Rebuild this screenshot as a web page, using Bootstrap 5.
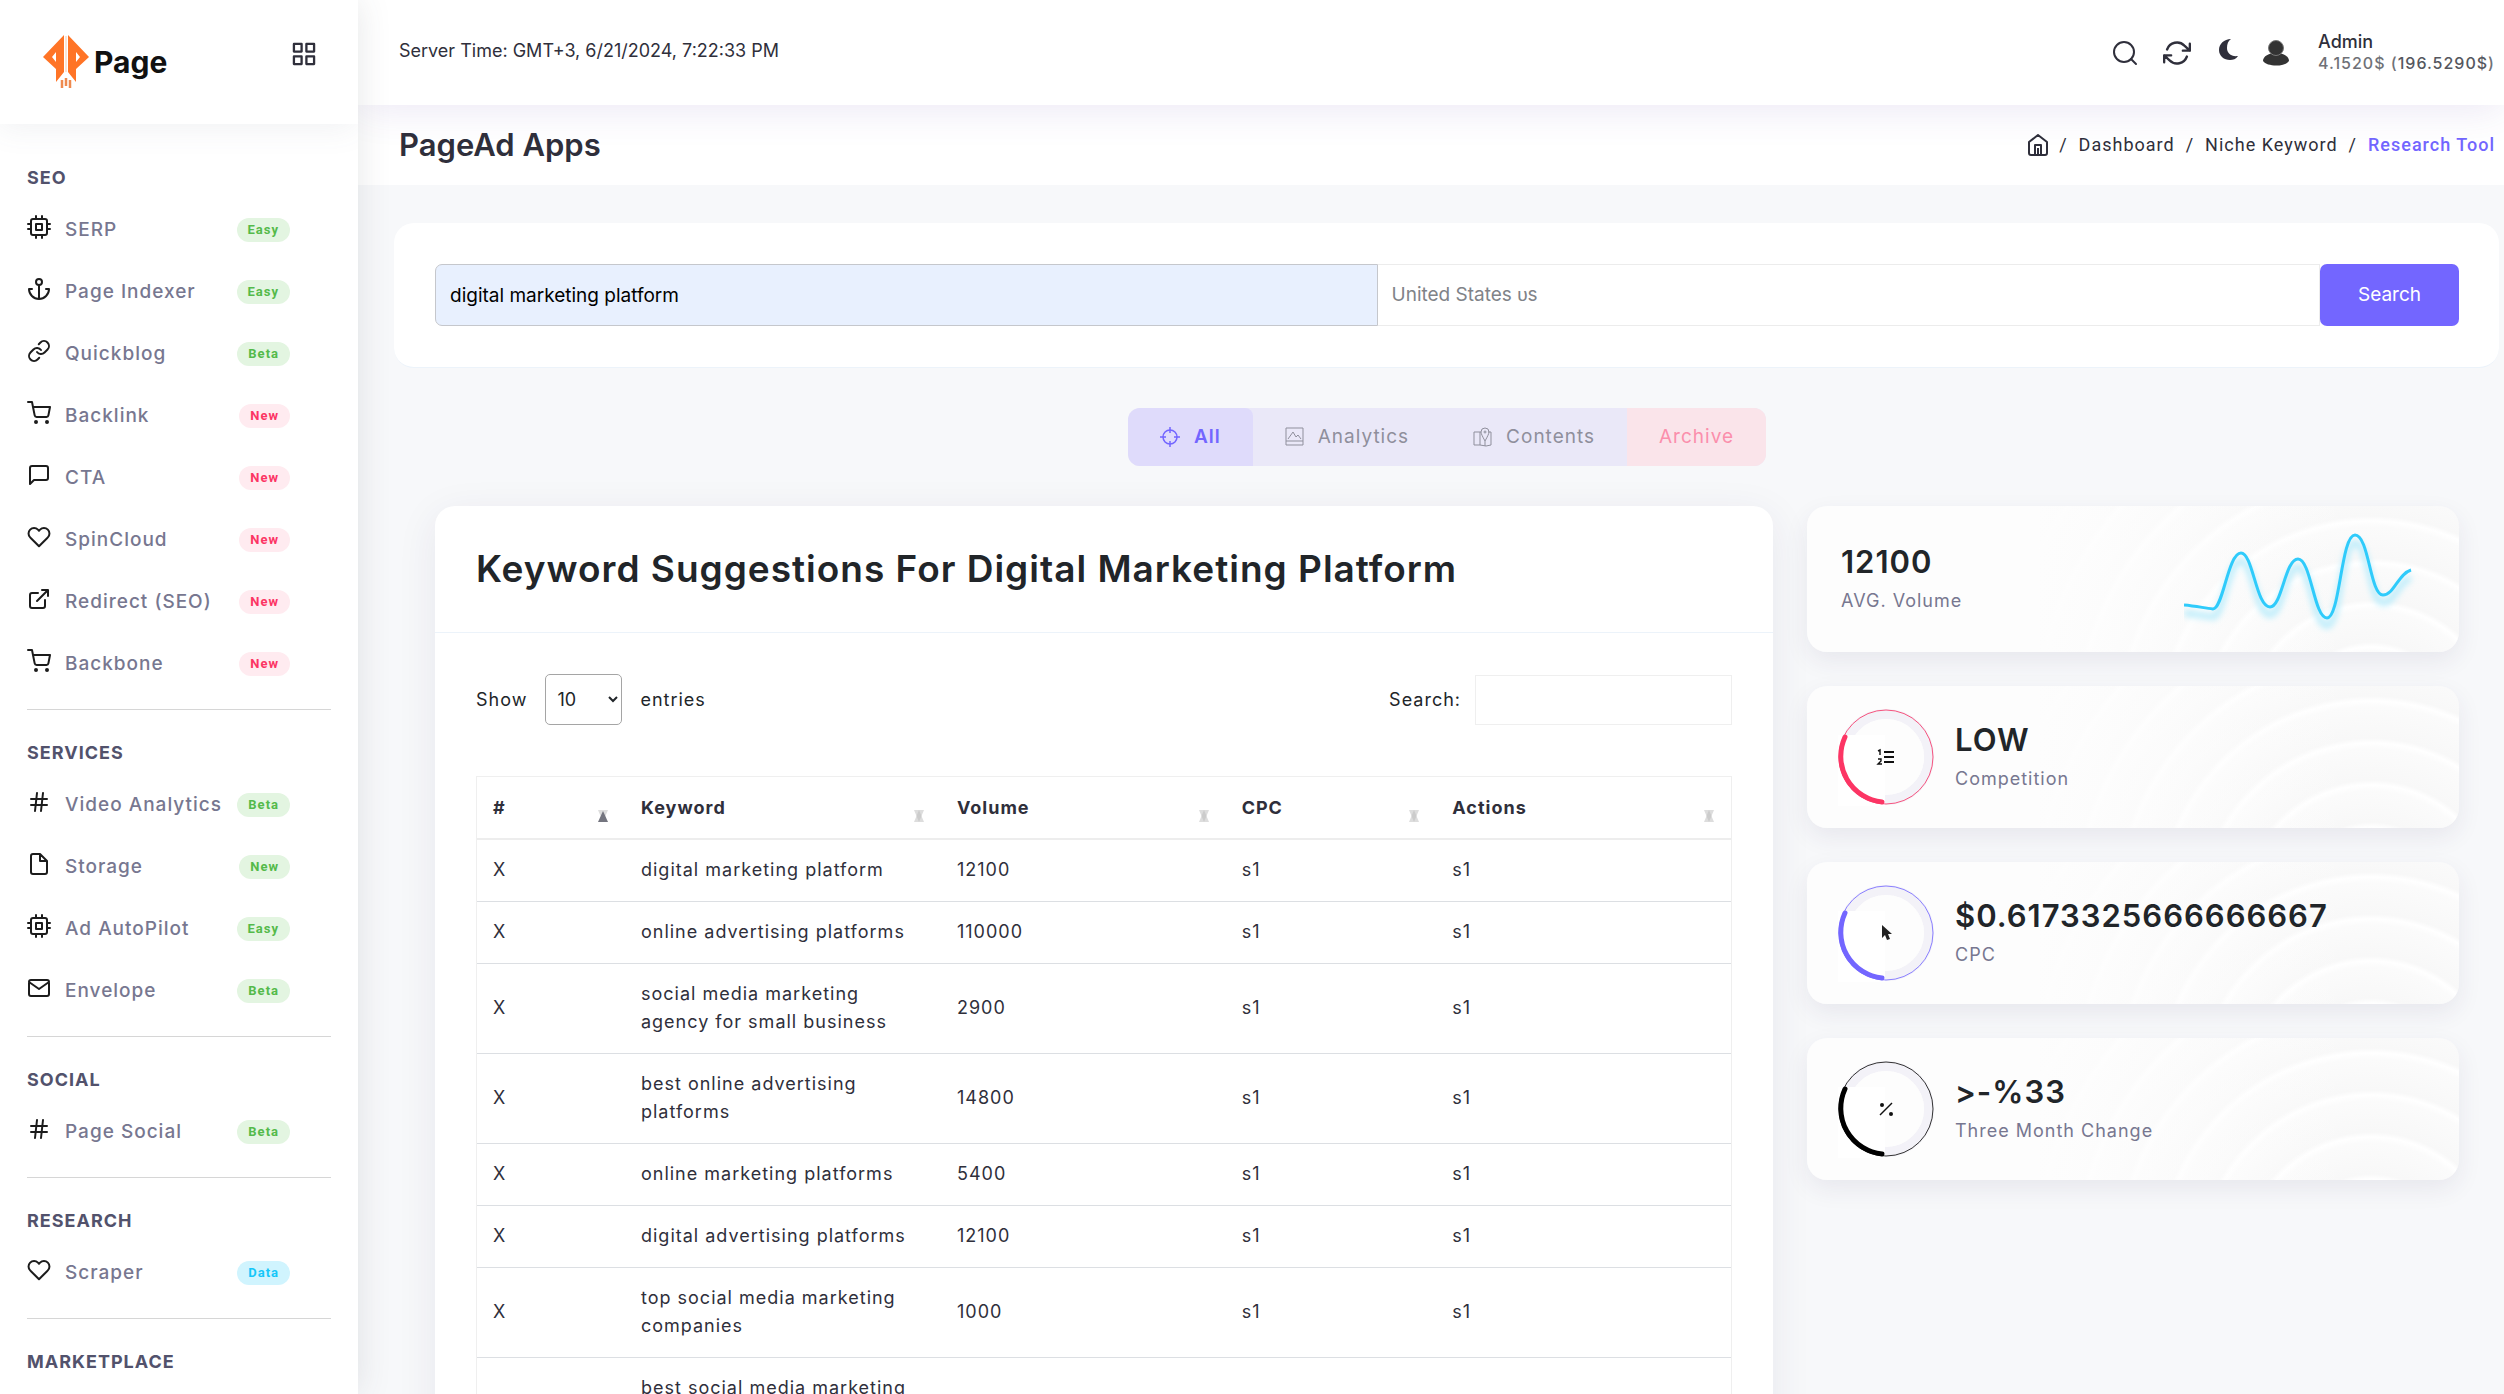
<!DOCTYPE html>
<html lang="en">
<head>
<meta charset="utf-8">
<meta name="viewport" content="width=device-width, initial-scale=1">
<title>PageAd Apps</title>
<link rel="stylesheet" href="https://cdn.jsdelivr.net/npm/bootstrap@5.3.0/dist/css/bootstrap.min.css">
<style>
:root{--brand:#7366ff;--ink:#2f2f3b;--muted:#777790}
body{font-family:Inter,Roboto,sans-serif;font-size:18px;line-height:28px;color:#212529;background:#f7f8fa}
.ico{fill:none;stroke:currentColor;stroke-width:2;stroke-linecap:round;stroke-linejoin:round;flex:none}
/* sidebar */
.side{width:358px;flex:none;background:#fff;box-shadow:0 0 32px rgba(60,70,80,.13);z-index:3}
.side-top{height:124px;padding:0 42px;box-shadow:-2px 4px 30px rgba(89,102,122,.09)}
.brand-name{font:700 30px/40px Inter,sans-serif;color:#111}
.side-group{padding:0 27px}
.side-title{font-size:18px;font-weight:700;line-height:22px;letter-spacing:1px;color:#52526c;margin:0;padding:32px 0 10px}
.side-group:first-of-type .side-title{padding-top:43px}
.side-link{height:62px;padding-right:41px;gap:14px;color:var(--muted);font-size:19px;font-weight:500;letter-spacing:1px;text-decoration:none}
.side-link svg{color:#1c1c1c;margin-bottom:6px}
.pill{font:700 13px/24px Roboto,sans-serif;letter-spacing:1px;border-radius:12px;padding:0 11px;margin-left:auto}
.pill-g{color:#54ba4a;background:#e3f5e1}
.pill-r{color:#fc3564;background:#ffebf0}
.pill-b{color:#16c7f9;background:#d0f4fe}
.side-rule{border:0;border-top:1px solid #ccc;opacity:.8;margin:14px 0 0}
/* header */
.topbar{height:105px;padding:0 9px 4px 41px;background:#fff;box-shadow:0 4px 40px rgba(89,60,162,.12);z-index:2;color:var(--ink)}
.tool-icon{border:0;background:none;padding:0;color:var(--ink);line-height:0}
.who{font-weight:500;line-height:22px}
.money{font-size:16px;line-height:21px;letter-spacing:1px;font-weight:500;color:#6f7177}
.money span{color:#55575e}
.titlebar{height:80px;padding:0 9px 0 41px;background:#fff}
.titlebar h1{font-size:31px;font-weight:600;margin:0;color:var(--ink)}
.crumbs{font-family:Roboto,sans-serif;font-size:18px;letter-spacing:1px;color:var(--ink);gap:11px}
.crumbs a{color:inherit;text-decoration:none}
.crumbs .now{color:var(--brand);font-weight:500}
/* content */
.main-col{overflow-y:auto;scrollbar-width:none;height:100vh}
.content-area{padding:38px 5px 0 36px}
.panel{background:#fff;border-radius:20px}
.search-panel{padding:41px 40px 41px 41px;border-bottom:1px solid #ecf3fa}
.field{height:62px;border:1px solid #ececec;border-radius:0;padding:0 14px;font-size:19px}
.field-key{background:#e8f0fe;border-color:#c5c7cc;color:#000;border-radius:7px 0 0 7px}
.field-country{color:#808388;background-image:none;border-left:0}
.btn-go{width:139px;height:62px;border-radius:7px;background:var(--brand);color:#fff;font-size:19px;border:0}
.inner{padding:40px 40px 0 41px}
.switcher{height:58px;border-radius:12px;overflow:hidden;background:#eae8f8}
.switcher button{border:0;background:none;color:#8f8f9c;font-size:19px;letter-spacing:1px;padding:0 32px 1px;gap:14px}
.switcher .on{background:#dfdbfb;color:var(--brand);font-weight:600;border-radius:0 8px 0 0}
.switcher .arch{background:#fae4ea;color:#fb8fac}
.row-wide{--bs-gutter-x:34px;margin-top:40px}
.sug{box-shadow:0 9px 40px rgba(46,35,94,.08)}
.sug-head{padding:41px;border-bottom:1px solid #ecf3fa}
.sug-head h2{font-size:37px;line-height:44px;font-weight:600;margin:0;letter-spacing:1px}
.sug-body{padding:41px 41px 60px}
.spaced{letter-spacing:1px}
.len{width:77px;height:51px;border:1px solid #a5a5a5;border-radius:5px;background:#fff;padding:0 9px 0 7px;color:#212529;margin:0 18px}
.filt{width:257px;height:50px;border:1px solid #efefef;margin-left:14px}
.kw{margin:51px 0 0;border:1px solid #efefef;letter-spacing:1px;table-layout:fixed;border-collapse:separate;border-spacing:0;color:var(--ink)}
.kw th{padding:17px 17px 16px 16px;border-bottom:2px solid #ededed;font-weight:700;color:var(--ink)}
.kw td{padding:16px 16px 17px;border-bottom:1px solid #dcdfe3;vertical-align:middle;color:var(--ink)}
.sorter{float:right;margin-top:16px}
/* stat cards */
.stat{height:142px;border-radius:20px;margin-bottom:34px;padding:0 30px;gap:20px;box-shadow:0 9px 24px rgba(46,35,94,.08);
background:linear-gradient(90deg,#fdfdfd 35%,rgba(253,253,253,0) 85%),repeating-radial-gradient(circle at calc(100% - 88px) 225px,#fff 0,#f8f8f8 5px,#fbfbfb 36px,#fff 42px)}
.stat-vol{height:146px;padding-left:34px}
.stat h3{font-size:31px;line-height:38px;font-weight:600;margin:0 0 6px;letter-spacing:1px}
.stat p{margin:0;color:var(--muted);letter-spacing:1px}
</style>
<script src="https://cdn.jsdelivr.net/npm/bootstrap@5.3.0/dist/js/bootstrap.bundle.min.js"></script>
</head>
<body>
<svg width="0" height="0" class="position-absolute" aria-hidden="true">
<symbol id="cpu" viewBox="0 0 24 24"><rect x="4" y="4" width="16" height="16" rx="2"/><path d="M9 9h6v6H9zM9 1v3M15 1v3M9 20v3M15 20v3M20 9h3M20 14h3M1 9h3M1 14h3"/></symbol>
<symbol id="anchor" viewBox="0 0 24 24"><circle cx="12" cy="5" r="3"/><path d="M12 22V8M5 12H2a10 10 0 0 0 20 0h-3"/></symbol>
<symbol id="chain" viewBox="0 0 24 24"><path d="M10 13a5 5 0 0 0 7.54.54l3-3a5 5 0 0 0-7.07-7.07l-1.72 1.71M14 11a5 5 0 0 0-7.54-.54l-3 3a5 5 0 0 0 7.07 7.07l1.71-1.71"/></symbol>
<symbol id="cart" viewBox="0 0 24 24"><circle cx="9" cy="21" r="1"/><circle cx="20" cy="21" r="1"/><path d="M1 1h4l2.68 13.39a2 2 0 0 0 2 1.61h9.72a2 2 0 0 0 2-1.61L23 6H6"/></symbol>
<symbol id="bubble" viewBox="0 0 24 24"><path d="M21 15a2 2 0 0 1-2 2H7l-4 4V5a2 2 0 0 1 2-2h14a2 2 0 0 1 2 2z"/></symbol>
<symbol id="heart" viewBox="0 0 24 24"><path d="M20.84 4.61a5.5 5.5 0 0 0-7.78 0L12 5.67l-1.06-1.06a5.5 5.5 0 0 0-7.78 7.78l1.06 1.06L12 21.23l7.78-7.78 1.06-1.06a5.5 5.5 0 0 0 0-7.78z"/></symbol>
<symbol id="ext" viewBox="0 0 24 24"><path d="M18 13v6a2 2 0 0 1-2 2H5a2 2 0 0 1-2-2V8a2 2 0 0 1 2-2h6M15 3h6v6M10 14L21 3"/></symbol>
<symbol id="hash" viewBox="0 0 24 24"><path d="M4 9h16M4 15h16M10 3L8 21M16 3l-2 18"/></symbol>
<symbol id="doc" viewBox="0 0 24 24"><path d="M13 2H6a2 2 0 0 0-2 2v16a2 2 0 0 0 2 2h12a2 2 0 0 0 2-2V9zM13 2v7h7"/></symbol>
<symbol id="mail" viewBox="0 0 24 24"><path d="M4 4h16a2 2 0 0 1 2 2v12a2 2 0 0 1-2 2H4a2 2 0 0 1-2-2V6a2 2 0 0 1 2-2zM22 6l-10 7L2 6"/></symbol>
<symbol id="sort" viewBox="0 0 10 12"><path d="M0 0h10L5 12z" fill="#ddd"/><path d="M5 0l5 12H0z" fill="#bbb" fill-opacity=".5"/></symbol>
<symbol id="sortup" viewBox="0 0 10 12"><path d="M0 0h10L5 12z" fill="#ddd"/><path d="M5 1l5 11H0z" fill="#74757f"/></symbol>
</svg>
<div class="d-flex vh-100 overflow-hidden">
<aside class="side d-flex flex-column vh-100 overflow-hidden position-relative">
  <div class="side-top d-flex align-items-center justify-content-between">
    <a href="#" class="d-flex align-items-center text-decoration-none gap-1">
      <svg width="48" height="56" viewBox="0 0 48 56" aria-hidden="true"><g fill="#ff7426"><path d="M22 1v37l-8 10V35L1 23z"/><path d="M26 1v37l8 10V35l13-12z"/></g><path d="M24 2v36" stroke="#f7c9ad"/><path d="M20 46v8M24 44v8M28 46v8" stroke="#ee8a4f" stroke-width="2.500"/><path d="M14 18v10l-4-5zM34 18v10l4-5z" fill="#fff"/></svg>
      <span class="brand-name">Page</span>
    </a>
    <button class="tool-icon mb-3" type="button" aria-label="Toggle sidebar"><svg width="24" height="24" viewBox="0 0 25 25" fill="none" stroke="#2f2f3b" stroke-width="2.400" stroke-linejoin="round" aria-hidden="true"><path d="M2 2h8v8H2zM15 2h8v8h-8zM2 15h8v8H2zM15 15h8v8h-8z"/></svg></button>
  </div>
  <nav aria-label="Main">
  <section class="side-group">
    <h6 class="side-title">SEO</h6>
    <a class="side-link d-flex align-items-center" href="#"><svg class="ico" width="24" height="24"><use href="#cpu"/></svg>SERP<span class="pill pill-g">Easy</span></a>
    <a class="side-link d-flex align-items-center" href="#"><svg class="ico" width="24" height="24"><use href="#anchor"/></svg>Page Indexer<span class="pill pill-g">Easy</span></a>
    <a class="side-link d-flex align-items-center" href="#"><svg class="ico" width="24" height="24"><use href="#chain"/></svg>Quickblog<span class="pill pill-g">Beta</span></a>
    <a class="side-link d-flex align-items-center" href="#"><svg class="ico" width="24" height="24"><use href="#cart"/></svg>Backlink<span class="pill pill-r">New</span></a>
    <a class="side-link d-flex align-items-center" href="#"><svg class="ico" width="24" height="24"><use href="#bubble"/></svg>CTA<span class="pill pill-r">New</span></a>
    <a class="side-link d-flex align-items-center" href="#"><svg class="ico" width="24" height="24"><use href="#heart"/></svg>SpinCloud<span class="pill pill-r">New</span></a>
    <a class="side-link d-flex align-items-center" href="#"><svg class="ico" width="24" height="24"><use href="#ext"/></svg>Redirect (SEO)<span class="pill pill-r">New</span></a>
    <a class="side-link d-flex align-items-center" href="#"><svg class="ico" width="24" height="24"><use href="#cart"/></svg>Backbone<span class="pill pill-r">New</span></a>
    <hr class="side-rule">
  </section>
  <section class="side-group">
    <h6 class="side-title">SERVICES</h6>
    <a class="side-link d-flex align-items-center" href="#"><svg class="ico" width="24" height="24"><use href="#hash"/></svg>Video Analytics<span class="pill pill-g">Beta</span></a>
    <a class="side-link d-flex align-items-center" href="#"><svg class="ico" width="24" height="24"><use href="#doc"/></svg>Storage<span class="pill pill-g">New</span></a>
    <a class="side-link d-flex align-items-center" href="#"><svg class="ico" width="24" height="24"><use href="#cpu"/></svg>Ad AutoPilot<span class="pill pill-g">Easy</span></a>
    <a class="side-link d-flex align-items-center" href="#"><svg class="ico" width="24" height="24"><use href="#mail"/></svg>Envelope<span class="pill pill-g">Beta</span></a>
    <hr class="side-rule">
  </section>
  <section class="side-group">
    <h6 class="side-title">SOCIAL</h6>
    <a class="side-link d-flex align-items-center" href="#"><svg class="ico" width="24" height="24"><use href="#hash"/></svg>Page Social<span class="pill pill-g">Beta</span></a>
    <hr class="side-rule">
  </section>
  <section class="side-group">
    <h6 class="side-title">RESEARCH</h6>
    <a class="side-link d-flex align-items-center" href="#"><svg class="ico" width="24" height="24"><use href="#heart"/></svg>Scraper<span class="pill pill-b">Data</span></a>
    <hr class="side-rule">
  </section>
  <section class="side-group">
    <h6 class="side-title">MARKETPLACE</h6>
  </section>
  </nav>
</aside>

<div class="main-col flex-grow-1">
  <header class="topbar position-relative d-flex align-items-center justify-content-between">
    <span>Server Time: GMT+3, 6/21/2024, 7:22:33 PM</span>
    <div class="d-flex align-items-center pt-1">
      <button class="tool-icon me-4" type="button" aria-label="Find"><svg width="28" height="28" viewBox="0 0 28 28" fill="none" stroke="currentColor" stroke-width="2" stroke-linecap="round" aria-hidden="true"><circle cx="13" cy="13" r="10"/><path d="M20 20l5 5"/></svg></button>
      <button class="tool-icon me-4" type="button" aria-label="Refresh"><svg class="ico" width="28" height="28" viewBox="0 0 24 24" aria-hidden="true"><path d="M23 4v6h-6M1 20v-6h6M3.510 9a9 9 0 0 1 14.850-3.360L23 10M1 14l4.640 4.360A9 9 0 0 0 20.490 15"/></svg></button>
      <button class="tool-icon me-4 mb-1" type="button" aria-label="Dark mode"><svg width="23" height="24" viewBox="-3 0 23 24" aria-hidden="true"><path d="M13 0C6 0 1 5 1 11s5 10 11 10c3 0 6-1 8-4-7 1-11-3-11-8 0-4 1-7 4-9z" fill="#2f2f3b"/></svg></button>
      <svg class="me-4" width="28" height="28" viewBox="0 0 28 28" aria-hidden="true"><path d="M1 22c0-5 6-8 13-8s13 3 13 8c-4 6-22 6-26 0z" fill="#333"/><circle cx="14" cy="9" r="7.500" fill="#333" stroke="#777"/></svg>
      <div class="ms-1"><div class="who">Admin</div><div class="money">4.1520$ (<span>196.5290$</span>)</div></div>
    </div>
  </header>
  <div class="titlebar d-flex align-items-center justify-content-between">
    <h1>PageAd Apps</h1>
    <nav class="crumbs d-flex align-items-center" aria-label="Breadcrumb">
      <a href="#" aria-label="Home" class="d-flex"><svg width="20" height="22" viewBox="0 0 20 22" fill="none" stroke="currentColor" stroke-width="2" stroke-linejoin="round" aria-hidden="true"><path d="M1 8l9-7 9 7v11q0 2-2 2H3q-2 0-2-2zM7 21V11h6v10M10 14v7"/></svg></a>
      <span>/</span><a href="#">Dashboard</a><span>/</span><a href="#">Niche Keyword</a><span>/</span><a href="#" class="now">Research Tool</a>
    </nav>
  </div>
  <main class="content-area">
    <form class="panel search-panel d-flex">
      <input class="form-control field field-key flex-fill w-50" type="text" value="digital marketing platform" aria-label="Keyword">
      <select class="form-select field field-country flex-fill w-50" aria-label="Country"><option>United States ᴜs</option></select>
      <button class="btn-go flex-shrink-0" type="button">Search</button>
    </form>
    <div class="inner">
      <div class="d-flex justify-content-center">
        <div class="switcher d-flex">
          <button type="button" class="on d-flex align-items-center"><svg width="20" height="20" viewBox="0 0 20 20" fill="none" stroke="currentColor" aria-hidden="true" stroke-width="1.500"><circle cx="10" cy="10" r="7"/><path d="M10 0v6M10 14v6M0 10h6M14 10h6"/></svg>All</button>
          <button type="button" class="d-flex align-items-center"><svg width="19" height="19" viewBox="0 0 19 19" fill="none" stroke="currentColor" aria-hidden="true"><path d="M1 1h17v17H1zM1 14h17M3 12l5-7 3 5 2-2 3 4"/></svg>Analytics</button>
          <button type="button" class="d-flex align-items-center"><svg width="19" height="20" viewBox="0 0 19 20" fill="none" stroke="currentColor" aria-hidden="true"><path d="M8 5H1v13h6l6 1 5-1V5h-3M7 5v13M12 14v5M12 14Q8 7 8 5a4 4 0 0 1 8 0q0 2-4 9z"/><circle cx="12" cy="5" r="1"/></svg>Contents</button>
          <button type="button" class="arch d-flex align-items-center">Archive</button>
        </div>
      </div>
      <div class="row row-wide">
        <div class="col-8">
          <section class="panel sug">
            <div class="sug-head"><h2>Keyword Suggestions For Digital Marketing Platform</h2></div>
            <div class="sug-body">
              <div class="d-flex justify-content-between spaced">
                <div class="d-flex align-items-center"><label for="len">Show</label><select id="len" class="len"><option>10</option></select><span>entries</span></div>
                <div class="d-flex align-items-center"><label for="filt">Search:</label><input id="filt" class="filt" type="search"></div>
              </div>
              <table class="kw w-100">
                <colgroup><col style="width:11.8%"><col style="width:25.2%"><col style="width:22.7%"><col style="width:16.8%"><col></colgroup>
                <thead><tr>
                  <th scope="col">#<svg class="sorter" width="10" height="12"><use href="#sortup"/></svg></th>
                  <th scope="col">Keyword<svg class="sorter" width="10" height="12"><use href="#sort"/></svg></th>
                  <th scope="col">Volume<svg class="sorter" width="10" height="12"><use href="#sort"/></svg></th>
                  <th scope="col">CPC<svg class="sorter" width="10" height="12"><use href="#sort"/></svg></th>
                  <th scope="col">Actions<svg class="sorter" width="10" height="12"><use href="#sort"/></svg></th>
                </tr></thead>
                <tbody>
                  <tr><td>X</td><td>digital marketing platform</td><td>12100</td><td>s1</td><td>s1</td></tr>
                  <tr><td>X</td><td>online advertising platforms</td><td>110000</td><td>s1</td><td>s1</td></tr>
                  <tr><td>X</td><td>social media marketing agency for small business</td><td>2900</td><td>s1</td><td>s1</td></tr>
                  <tr><td>X</td><td>best online advertising platforms</td><td>14800</td><td>s1</td><td>s1</td></tr>
                  <tr><td>X</td><td>online marketing platforms</td><td>5400</td><td>s1</td><td>s1</td></tr>
                  <tr><td>X</td><td>digital advertising platforms</td><td>12100</td><td>s1</td><td>s1</td></tr>
                  <tr><td>X</td><td>top social media marketing companies</td><td>1000</td><td>s1</td><td>s1</td></tr>
                  <tr><td>X</td><td>best social media marketing platforms</td><td></td><td>s1</td><td>s1</td></tr>
                </tbody>
              </table>
            </div>
          </section>
        </div>
        <div class="col-4">
          <section class="stat stat-vol d-flex align-items-center justify-content-between">
            <div><h3>12100</h3><p>AVG. Volume</p></div>
            <svg width="245" height="110" viewBox="0 0 245 110" fill="none" aria-hidden="true"><defs><filter id="soft" x="-10%" y="-10%" width="120%" height="130%"><feGaussianBlur stdDeviation="3"/></filter></defs>
            <path d="M0 81C12 82 20 84 29 85C39 85 44 29 57 29C69 29 72 83 86 83C98 83 101 35 114 35C127 35 130 94 143 94C156 94 157 11 171 11C185 11 186 71 199 71C210 71 214 50 227 46" transform="translate(0 8)" stroke="#b9ecfb" stroke-width="6" filter="url(#soft)"/>
            <path d="M0 81C12 82 20 84 29 85C39 85 44 29 57 29C69 29 72 83 86 83C98 83 101 35 114 35C127 35 130 94 143 94C156 94 157 11 171 11C185 11 186 71 199 71C210 71 214 50 227 46" stroke="#2fcbfb" stroke-width="3"/></svg>
          </section>
          <section class="stat d-flex align-items-center">
            <svg width="98" height="98" viewBox="0 0 98 98" fill="none" aria-hidden="true"><circle cx="49" cy="49" r="43" stroke="#f3f2f8" stroke-width="10"/><circle cx="49" cy="49" r="38" fill="#fdfdfd"/><path d="M1 27h47v71H1z" fill="#fff"/><circle cx="49" cy="49" r="47" stroke="#f6547f"/><path d="M8 29A46 46 0 0 0 45 94" stroke="#fc3564" stroke-width="5" stroke-linecap="round"/><path d="M47 44h10M47 49h10M47 54h10" stroke="#111" stroke-width="2"/><path d="M41 43l2-1v5M41 51h3v2l-3 3h4" stroke="#111" stroke-width="1.400"/></svg>
            <div><h3>LOW</h3><p>Competition</p></div>
          </section>
          <section class="stat d-flex align-items-center">
            <svg width="98" height="98" viewBox="0 0 98 98" fill="none" aria-hidden="true"><circle cx="49" cy="49" r="43" stroke="#f3f2f8" stroke-width="10"/><circle cx="49" cy="49" r="38" fill="#fdfdfd"/><path d="M1 27h47v71H1z" fill="#fff"/><circle cx="49" cy="49" r="47" stroke="#8b80ff"/><path d="M8 29A46 46 0 0 0 45 94" stroke="#7366ff" stroke-width="5" stroke-linecap="round"/><path d="M45 41v13l3-3 2 5 3-1-2-5h4z" fill="#222"/></svg>
            <div><h3>$0.6173325666666667</h3><p>CPC</p></div>
          </section>
          <section class="stat d-flex align-items-center">
            <svg width="98" height="98" viewBox="0 0 98 98" fill="none" aria-hidden="true"><circle cx="49" cy="49" r="43" stroke="#f3f2f8" stroke-width="10"/><circle cx="49" cy="49" r="38" fill="#fdfdfd"/><path d="M1 27h47v71H1z" fill="#fff"/><circle cx="49" cy="49" r="47" stroke="#333"/><path d="M8 29A46 46 0 0 0 45 94" stroke="#000" stroke-width="5" stroke-linecap="round"/><path d="M43 55L55 43" stroke="#111" stroke-width="1.500"/><circle cx="45" cy="45" r="2" fill="#111"/><circle cx="54" cy="54" r="2" fill="#111"/></svg>
            <div><h3>&gt;-%33</h3><p>Three Month Change</p></div>
          </section>
        </div>
      </div>
    </div>
  </main>
</div>
</div>
</body>
</html>
